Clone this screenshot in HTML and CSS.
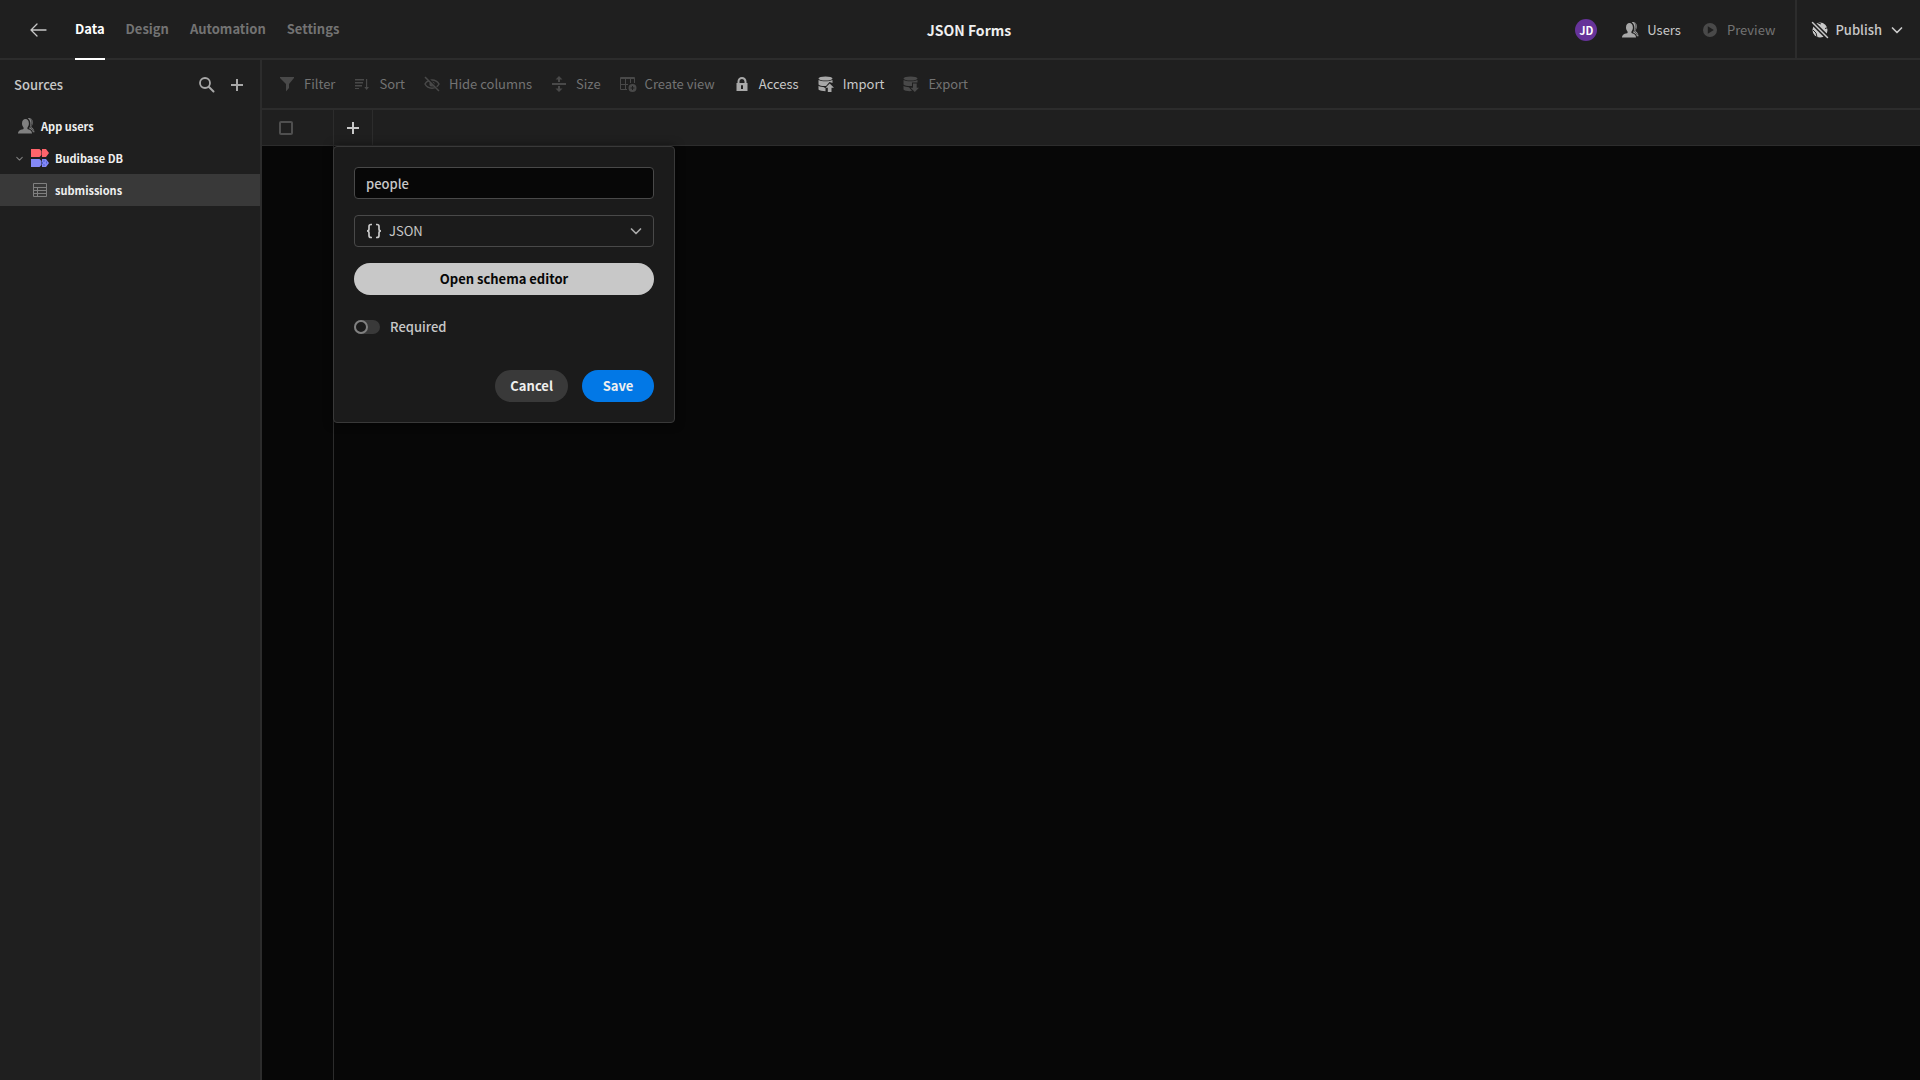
FILE: index.html
```html
<!DOCTYPE html>
<html lang="en">
<head>
<meta charset="utf-8">
<title>JSON Forms</title>
<meta name="viewport" content="width=device-width, initial-scale=1">
<link rel="stylesheet" href="styles.css">
</head>
<body>
<svg class="sprite" aria-hidden="true">
  <symbol id="i-users" viewBox="0 0 18 18">
    <path d="M10.400 11.600v-.7c0-.3.1-.5.3-.7.8-.9 1.200-2.100 1.200-3.600C11.900 3.600 10.500 2 8.500 2 6.400 2 5 3.600 5 6.600c0 1.500.500 2.700 1.300 3.600.2.200.3.400.3.700v.7c0 .3-.2.600-.5.600C2.500 12.700 1 14.300 1 16.200v.3h14v-.3c0-1.900-1.400-3.500-4.100-4-.3 0-.5-.3-.5-.6z"/>
    <path d="M10.800 1.200c3-.8 5 1.200 5 4.200 0 1.500-.5 2.800-1.300 3.700v1.200c1.700.900 2.800 2.500 3 5h-1.600c-.4-1.900-1.600-3.200-3.700-3.900v-.5c.8-1 1.200-2.400 1.200-4 0-2.600-1-4.800-2.600-5.700z"/>
    <path d="M13.500 1.500c1.100 1.200 1.500 2.900 1.300 4.900-.1 1.500-.5 2.600-1.200 3.600v.8c1.500.8 2.500 2 3 3.500" fill="none" stroke="#1f1f1f" stroke-width=".6"/>
  </symbol>
  <symbol id="i-plus" viewBox="0 0 18 18"><path d="M8 3h2v5h5v2h-5v5H8v-5H3V8h5z"/></symbol>
  <symbol id="i-chevron" viewBox="0 0 18 18"><path d="M4.500 7 9 11.500 13.500 7" fill="none" stroke="currentColor" stroke-width="1.700" stroke-linecap="round" stroke-linejoin="round"/></symbol>
</svg>

<header class="topbar">
  <nav class="topbar-nav">
    <a class="back" href="#" aria-label="Back">
      <svg class="icon" viewBox="0 0 18 18"><path d="M17 9H2M8 3 2 9l6 6" fill="none" stroke="currentColor" stroke-width="1.300" stroke-linecap="round" stroke-linejoin="round"/></svg>
    </a>
    <a class="tab active" href="#">Data</a>
    <a class="tab" href="#">Design</a>
    <a class="tab" href="#">Automation</a>
    <a class="tab" href="#">Settings</a>
  </nav>
  <h1 class="app-title">JSON Forms</h1>
  <div class="topbar-actions">
    <span class="avatar">JD</span>
    <button class="action" type="button"><svg class="icon"><use href="#i-users"/></svg>Users</button>
    <button class="action" type="button" disabled><svg class="icon" viewBox="0 0 18 18"><path fill-rule="evenodd" d="M9 2a7 7 0 1 0 0 14A7 7 0 0 0 9 2zM6.800 5.200v7.600l6-3.800z"/></svg>Preview</button>
    <button class="action publish" type="button">
      <svg class="icon" viewBox="0 0 18 18"><circle cx="9" cy="9" r="7.500"/><path d="M1 1 17 17" stroke="#1f1f1f" stroke-width="4.500"/><path d="M6 1.500 10 3M2 9l3 3 1 4M14 7.500l3-1" fill="none" stroke="#1f1f1f" stroke-width="1"/><path d="M1.500 1.500 16.500 16.500" stroke="currentColor" stroke-width="1.500" stroke-linecap="round"/></svg>
      Publish
      <svg class="icon"><use href="#i-chevron"/></svg>
    </button>
  </div>
</header>

<div class="workspace">
  <aside class="sidebar">
    <div class="sidebar-head">
      <h2 class="sidebar-title">Sources</h2>
      <button class="icon-button" type="button" aria-label="Search"><svg class="icon" viewBox="0 0 18 18"><circle cx="7" cy="7" r="5" fill="none" stroke="currentColor" stroke-width="1.800"/><path d="m11 11 4.500 4.500" stroke="currentColor" stroke-width="2" stroke-linecap="round"/></svg></button>
      <button class="icon-button" type="button" aria-label="Add source"><svg class="icon"><use href="#i-plus"/></svg></button>
    </div>
    <nav class="sources">
      <a class="source" href="#"><svg class="icon"><use href="#i-users"/></svg>App users</a>
      <a class="source database" href="#">
        <svg class="caret"><use href="#i-chevron"/></svg>
        <svg class="icon" viewBox="0 0 18 18"><path fill="#ff646b" d="M0 0h8.500l2 2v4l-2 2H0zM11 0h4l3 4-3 4h-4z"/><path fill="#8488f6" d="M0 10h8.500l2 2v4l-2 2H0zM11 10h4l3 4-3 4h-4z"/><path d="M13 11v2M15.500 12.500v2M13 15v2M11.500 13v2" stroke="#4b5fd6"/></svg>
        Budibase DB
      </a>
      <a class="source table selected" href="#"><svg class="icon" viewBox="0 0 18 18"><path d="M2.500 2.500h13v13h-13zM2.500 6.500h13M2.500 9.500h13M2.500 12.500h13M6.500 6.500v9" fill="none" stroke="currentColor"/></svg>submissions</a>
    </nav>
  </aside>

  <main class="content">
    <div class="toolbar">
      <button class="tool" type="button" disabled><svg class="icon" viewBox="0 0 18 18"><path d="M2 2h14v1l-5 6v4l-3 3.500V9L2 3z"/></svg>Filter</button>
      <button class="tool" type="button" disabled><svg class="icon" viewBox="0 0 18 18"><path d="M2 4h9v1.500H2zM2 7h8v1.500H2zM2 10h7v1.500H2zM2 13h4v1H2zM13 4h1.200v8H16l-2.400 3-2.300-3H13z"/></svg>Sort</button>
      <button class="tool" type="button" disabled><svg class="icon" viewBox="0 0 18 18"><path d="M2 9c3-5.500 11-5.500 14 0-3 5.500-11 5.500-14 0z" fill="none" stroke="currentColor" stroke-width="1.500"/><circle cx="9" cy="9" r="2.600"/><path d="m3 1 13 15" stroke="#1f1f1f" stroke-width="2"/><path d="m2 2 14 14" stroke="currentColor" stroke-width="1.500"/></svg>Hide columns</button>
      <button class="tool" type="button" disabled><svg class="icon" viewBox="0 0 18 18"><path d="M2 8h14v2H2zM8 7V4.500H5.500L9 1l3.500 3.500H10V7zM8 11v2.500H5.500L9 17l3.500-3.500H10V11z"/></svg>Size</button>
      <button class="tool" type="button" disabled><svg class="icon" viewBox="0 0 18 18"><path d="M8 14.500H1.500v-12h14V8M1.500 9.500H9M6.500 2.500v12M11.500 2.500V8M1.500 3.500h14" fill="none" stroke="currentColor"/><path fill-rule="evenodd" d="M13.500 9a4 4 0 1 0 0 8 4 4 0 0 0 0-8zM13 11h1v1.500h1.500v1H14V15h-1v-1.500h-1.500v-1H13z"/></svg>Create view</button>
      <button class="tool" type="button"><svg class="icon" viewBox="0 0 18 18"><path fill-rule="evenodd" d="M4.500 8V6.500a4.500 4.500 0 0 1 9 0V8h1v8h-11V8zM6.500 8h5V6.500a2.500 2.500 0 0 0-5 0zM8 11v3h2v-3a1 1 0 0 0-2 0z"/></svg>Access</button>
      <button class="tool" type="button"><svg class="icon" viewBox="0 0 18 18"><ellipse cx="8.500" cy="3.500" rx="7" ry="2"/><path d="M1.500 5c3 1.800 11 1.800 14 0v3L12.500 7 9 11c-3.500.3-6-.3-7.500-1.500zM1.500 10.800c1.500 1 3.500 1.400 6 1.400V13h1v3.200c-3 0-6-.5-7-1.700zM12.700 8.500l4.300 4.300h-2.500V17h-3.700v-4.200H8.500z"/></svg>Import</button>
      <button class="tool" type="button" disabled><svg class="icon" viewBox="0 0 18 18"><ellipse cx="8.500" cy="3.500" rx="7" ry="2"/><path d="M1.500 5c3 1.800 11 1.800 14 0v2.500H10V11c-3.500.3-7-.3-8.500-1.500zM1.500 10.800c1.500 1 3 1.400 5.500 1.400l3 3.800c-3 .4-7.500 0-8.500-1.500zM11 8.500h3.700v4.200H17L12.800 17l-4.300-4.300H11z"/></svg>Export</button>
    </div>

    <div class="grid">
      <div class="grid-head">
        <div class="cell-check"><input class="check" type="checkbox" aria-label="Select all rows"></div>
        <button class="add-column" type="button" aria-label="Add column"><svg class="icon"><use href="#i-plus"/></svg></button>
      </div>
      <div class="grid-body">
        <div class="gutter"></div>
        <form class="popover">
          <input class="field" type="text" value="people" aria-label="Column name">
          <div class="picker">
            <svg class="picker-icon" viewBox="0 0 18 18"><path d="M7 2.500H6C4.500 2.500 4 3.300 4 4.500V7c0 1.200-.5 2-2 2 1.500 0 2 .8 2 2v2.500c0 1.200.5 2 2 2h1M11 2.500h1c1.500 0 2 .8 2 2V7c0 1.200.5 2 2 2-1.500 0-2 .8-2 2v2.500c0 1.200-.5 2-2 2h-1" fill="none" stroke="currentColor" stroke-width="1.700"/></svg>
            <select class="select" aria-label="Column type"><option>JSON</option></select>
            <svg class="picker-caret"><use href="#i-chevron"/></svg>
          </div>
          <button class="button light" type="button">Open schema editor</button>
          <label class="toggle"><input class="switch" type="checkbox">Required</label>
          <div class="buttons">
            <button class="button dark" type="button">Cancel</button>
            <button class="button primary" type="submit">Save</button>
          </div>
        </form>
      </div>
    </div>
  </main>
</div>
</body>
</html>
```
FILE: styles.css
```css
:root {
  --panel: #1f1f1f;
  --line: #2c2c2c;
  --line-strong: #494949;
  --canvas: #070707;
  --text: #c8c8c8;
  --muted: #737373;
  --bright: #efefef;
}

* {
  box-sizing: border-box;
}

body {
  margin: 0;
  min-height: 100vh;
  display: flex;
  flex-direction: column;
  background: var(--canvas);
  color: var(--text);
  font: 13px/20px "Noto Sans CJK SC", "Noto Sans", sans-serif;
}

button,
input,
select {
  font: inherit;
  color: inherit;
  margin: 0;
}

button {
  border: 0;
  padding: 0;
  background: none;
  cursor: pointer;
}

a {
  color: inherit;
  text-decoration: none;
}

.sprite {
  display: none;
}

.icon {
  width: 18px;
  height: 18px;
  flex: none;
  fill: currentColor;
}

/* Top bar */
.topbar {
  display: grid;
  grid-template-columns: 1fr auto 1fr;
  height: 60px;
  padding-left: 18px;
  background: var(--panel);
  border-bottom: 2px solid var(--line);
}

.topbar-nav {
  display: flex;
  gap: 21px;
}

.back {
  display: flex;
  align-items: center;
  padding: 0 7px 0 11px;
}

.tab {
  display: flex;
  align-items: center;
  height: 60px;
  border-bottom: 2px solid transparent;
  color: var(--muted);
  font-weight: 700;
}

.tab.active {
  color: #fff;
  border-color: #fff;
}

.app-title {
  align-self: center;
  margin: 0;
  color: var(--bright);
  font-size: 14px;
  font-weight: 700;
}

.topbar-actions {
  display: flex;
  justify-content: flex-end;
  align-items: center;
  gap: 20px;
}

.avatar {
  width: 22px;
  height: 22px;
  margin-right: 4px;
  border-radius: 50%;
  background: #663399;
  color: #fff;
  font-size: 11px;
  line-height: 22px;
  font-weight: 700;
  text-align: center;
}

.action,
.tool {
  display: flex;
  align-items: center;
  gap: 8px;
}

.action:disabled,
.tool:disabled {
  color: var(--muted);
}

.icon-button,
.tool .icon,
.topbar-actions .icon {
  color: #a8a8a8;
}

.action:disabled .icon,
.tool:disabled .icon {
  color: #494949;
}

.action.publish {
  align-self: stretch;
  gap: 6px;
  padding: 0 14px;
  border-left: 2px solid var(--line);
  font-weight: 500;
}

.publish .icon {
  color: var(--text);
}

/* Sidebar */
.workspace {
  flex: 1;
  display: flex;
}

.sidebar {
  width: 262px;
  flex: none;
  background: var(--panel);
  border-right: 2px solid var(--line);
}

.sidebar-head {
  display: flex;
  align-items: center;
  gap: 12px;
  height: 50px;
  padding: 0 14px;
}

.sidebar-title {
  flex: 1;
  margin: 0;
  font-size: 13px;
  font-weight: 500;
}

.icon-button {
  display: flex;
}

.source {
  display: flex;
  align-items: center;
  gap: 6px;
  height: 32px;
  padding-left: 17px;
  color: var(--bright);
  font-size: 11px;
  font-weight: 700;
}

.source .icon {
  color: #808080;
}

.database {
  padding-left: 14px;
}

.caret {
  width: 11px;
  height: 11px;
  color: #808080;
}

.table {
  padding-left: 31px;
}

.selected {
  background: #393939;
}

/* Table area */
.content {
  flex: 1;
  min-width: 0;
  display: flex;
  flex-direction: column;
}

.toolbar {
  display: flex;
  align-items: center;
  gap: 18px;
  height: 50px;
  padding: 0 16px;
  background: var(--panel);
  border-bottom: 2px solid var(--line);
}

.grid {
  flex: 1;
  display: flex;
  flex-direction: column;
}

.grid-head {
  display: flex;
  height: 36px;
  background: var(--panel);
  border-bottom: 1px solid var(--line);
}

.cell-check {
  display: flex;
  align-items: center;
  width: 72px;
  padding-left: 17px;
  border-right: 1px solid var(--line);
}

.check {
  appearance: none;
  width: 14px;
  height: 14px;
  border: 2px solid #4f4f4f;
  border-radius: 2px;
}

.add-column {
  display: flex;
  align-items: center;
  justify-content: center;
  width: 39px;
  border-right: 1px solid var(--line);
}

.grid-body {
  flex: 1;
  position: relative;
  display: flex;
}

.gutter {
  width: 72px;
  border-right: 1px solid var(--line);
}

.popover {
  position: absolute;
  top: 0;
  left: 71px;
  width: 342px;
  display: flex;
  flex-direction: column;
  gap: 16px;
  padding: 20px;
  background: #1b1b1b;
  border: 1px solid #393939;
  border-radius: 4px;
  box-shadow: 0 0 10px #00000080;
}

.field,
.select {
  width: 100%;
  height: 32px;
  border: 1px solid var(--line-strong);
  border-radius: 4px;
}

.field {
  padding: 0 11px;
  background: var(--canvas);
  font-weight: 500;
}

.picker {
  position: relative;
  display: flex;
}

.select {
  appearance: none;
  padding: 0 34px;
  background: none;
}

.picker-icon,
.picker-caret {
  position: absolute;
  top: 7px;
  width: 18px;
  height: 18px;
  pointer-events: none;
}

.picker-icon {
  left: 11px;
}

.picker-caret {
  right: 9px;
  color: #a8a8a8;
}

.button {
  height: 32px;
  padding: 0 15px;
  border-radius: 16px;
  font-weight: 700;
}

.light {
  background: var(--text);
  color: #070707;
}

.dark {
  background: #393939;
  color: var(--bright);
}

.primary {
  min-width: 72px;
  background: #0278e6;
  color: var(--bright);
}

.toggle {
  display: flex;
  align-items: center;
  gap: 10px;
  height: 32px;
  font-weight: 500;
}

.switch {
  appearance: none;
  display: flex;
  width: 26px;
  height: 14px;
  border-radius: 7px;
  background: #393939;
}

.switch::before {
  content: "";
  width: 14px;
  height: 14px;
  box-sizing: border-box;
  border: 2px solid #808080;
  border-radius: 50%;
  background: #1b1b1b;
}

.switch:checked {
  justify-content: flex-end;
}

.buttons {
  display: flex;
  justify-content: flex-end;
  gap: 14px;
  padding-top: 11px;
}
```
